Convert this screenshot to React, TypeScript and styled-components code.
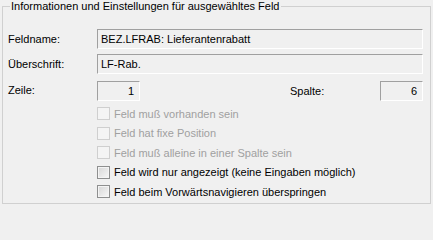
import React from "react";
import styled, { createGlobalStyle } from "styled-components";

const GlobalStyle = createGlobalStyle`
  html, body {
    margin: 0;
    padding: 0;
    background: #f0f0f0;
  }
  body {
    font-family: "Liberation Sans", Arial, sans-serif;
    font-size: 11px;
    color: #000;
  }
`;

const Page = styled.div`
  width: 433px;
  height: 206px;
  padding: 0 2px 0 2px;
  box-sizing: border-box;
  overflow: hidden;
`;

const Group = styled.fieldset`
  margin: 0;
  padding: 16px 7px 0 5px;
  height: 204px;
  box-sizing: border-box;
  border: 1px solid #d0d0d0;
  min-width: 0;
`;

const Title = styled.legend`
  padding: 0 2px 0 1px;
  margin-left: 2px;
  font-size: 11px;
  line-height: 13px;
`;

const FormGrid = styled.div`
  display: grid;
  grid-template-columns: 89px 1fr;
  row-gap: 5px;
  align-items: center;
`;

const Label = styled.label`
  line-height: 13px;
`;

const Field = styled.div<{ $align?: "left" | "right"; $width?: number }>`
  height: 20px;
  box-sizing: border-box;
  width: ${(p) => (p.$width ? `${p.$width}px` : "auto")};
  border-top: 1px solid #a0a0a0;
  border-left: 1px solid #a0a0a0;
  border-right: 1px solid #ffffff;
  border-bottom: 1px solid #ffffff;
  padding: 0 ${(p) => (p.$align === "right" ? "5px" : "3px")};
  text-align: ${(p) => p.$align || "left"};
  line-height: 18px;
  white-space: nowrap;
  overflow: hidden;
`;

const NumberRow = styled.div`
  display: flex;
  align-items: center;
  height: 21px;
  margin-top: 1px;
`;

const Spacer = styled.div`
  flex: 1;
`;

const SpalteLabel = styled.span`
  width: 90px;
`;

const CheckList = styled.div`
  grid-column: 2;
  display: flex;
  flex-direction: column;
  margin-top: -2px;
`;

const CheckRow = styled.div<{ $disabled?: boolean }>`
  display: flex;
  align-items: center;
  height: 19.5px;
  color: ${(p) => (p.$disabled ? "#a0a0a0" : "#000")};
`;

const Box = styled.span<{ $disabled?: boolean }>`
  width: 13px;
  height: 13px;
  box-sizing: border-box;
  margin-right: 4px;
  border: 1px solid ${(p) => (p.$disabled ? "#cfcfcf" : "#8e8f8f")};
  background: ${(p) =>
    p.$disabled
      ? "#f4f4f4"
      : "linear-gradient(135deg, #d6d6d6 0%, #eaeaea 60%, #f8f8f8 100%)"};
  box-shadow: ${(p) => (p.$disabled ? "none" : "inset 0 0 0 1px #f4f4f4")};
`;

const checks = [
  { text: "Feld muß vorhanden sein", disabled: true },
  { text: "Feld hat fixe Position", disabled: true },
  { text: "Feld muß alleine in einer Spalte sein", disabled: true },
  { text: "Feld wird nur angezeigt (keine Eingaben möglich)", disabled: false },
  { text: "Feld beim Vorwärtsnavigieren überspringen", disabled: false },
];

export default function App() {
  return (
    <Page>
      <GlobalStyle />
      <Group>
        <Title>Informationen und Einstellungen für ausgewähltes Feld</Title>
        <FormGrid>
          <Label>Feldname:</Label>
          <Field>BEZ.LFRAB: Lieferantenrabatt</Field>

          <Label>Überschrift:</Label>
          <Field>LF-Rab.</Field>

          <Label>Zeile:</Label>
          <NumberRow>
            <Field $align="right" $width={43}>
              1
            </Field>
            <Spacer />
            <SpalteLabel>Spalte:</SpalteLabel>
            <Field $align="right" $width={43}>
              6
            </Field>
          </NumberRow>

          <CheckList>
            {checks.map((c) => (
              <CheckRow key={c.text} $disabled={c.disabled}>
                <Box $disabled={c.disabled} />
                {c.text}
              </CheckRow>
            ))}
          </CheckList>
        </FormGrid>
      </Group>
    </Page>
  );
}
